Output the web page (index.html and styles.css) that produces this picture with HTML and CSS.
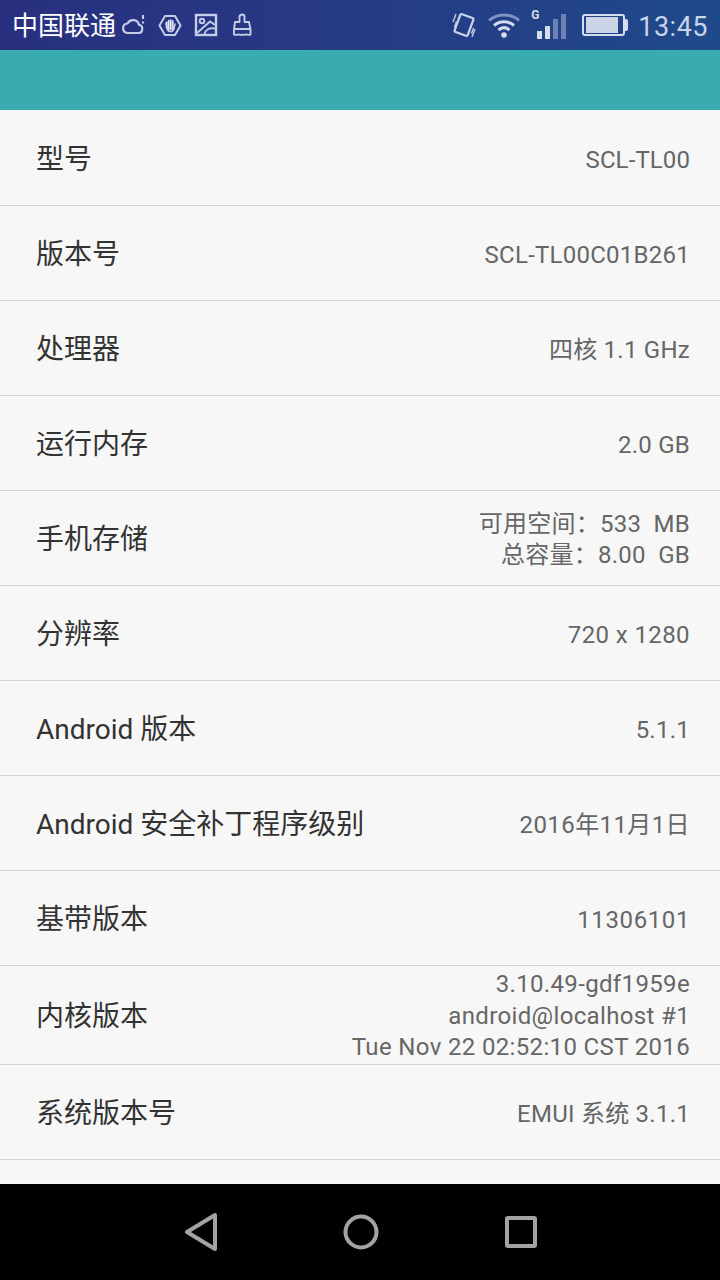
FILE: index.html
```html
<!DOCTYPE html>
<html lang="zh-CN">
<head>
<meta charset="utf-8">
<title>关于手机</title>
<link rel="stylesheet" href="styles.css">
</head>
<body>
<div class="screen">
  <header class="status">
    <div class="status-left">
      <span class="carrier">中国联通</span>
      <svg class="ic" width="24" height="24" viewBox="0 0 24 24" fill="none" stroke="#c5cde8" stroke-width="2.200"><path d="M6 20h11a4.200 4.200 0 0 0 1-8.300A6.200 6.200 0 0 0 6.500 10.500 4.800 4.800 0 0 0 6 20z"/><path d="M22 2v4M22 8.500v2"/></svg>
      <svg class="ic ic-hand" width="24" height="24" viewBox="0 0 24 24" fill="none" stroke="#c5cde8" stroke-width="2"><path d="M7 3h10l5.500 9.500L17 22H7L1.500 12.500z" stroke-linejoin="round"/><path d="M8 10.500l1 5c.500 2 2 3 3.500 3s3-1 3.500-3l1-4.500" stroke-width="1.600" stroke-linecap="round"/><path d="M8.800 9v6M10.800 7.500v9M12.800 7v9.500M14.800 8v8" stroke-width="1.700" stroke-linecap="round" stroke="#dfe3f3"/></svg>
      <svg class="ic ic-pic" width="24" height="24" viewBox="0 0 24 24" fill="none" stroke="#c5cde8" stroke-width="2.400"><rect x="2" y="2" width="20" height="20"/><circle cx="8" cy="8" r="2.300" stroke-width="1.900"/><path d="M3 20L16 8.500l5 3.500M10.500 21c1-4 5-6.500 10.500-5.500" stroke-width="1.900"/></svg>
      <svg class="ic ic-brush" width="24" height="24" viewBox="0 0 24 24" fill="none" stroke="#c5cde8" stroke-width="1.900" stroke-linejoin="round"><path d="M9.500 9V4a2.500 2.500 0 0 1 5 0v5h4.500l1.500 7.500v5c-1.500 1-3 0-4 0s-2.500 1-4 0c-1.500 1-3 0-4 0s-2.500 1-4.500 0v-5L5 9zM3.500 16h17"/></svg>
    </div>
    <div class="status-right">
      <svg class="ic" width="24" height="26" viewBox="0 0 24 26" fill="none" stroke="#c9d3ea"><rect x="5" y="3.500" width="14" height="19" rx="1.500" transform="rotate(20 12 13)" stroke-width="2.200"/><path d="M1 10l3-8M2.500 15l2-5.500M21.500 16l-2 5.500M23 17l-3 8" stroke-width="1.300"/></svg>
      <svg class="ic ic-wifi" width="34" height="26" viewBox="0 0 34 26" fill="none" stroke-width="3"><path d="M2 8.500C10 1 24 1 32 8.500" stroke="#7f93c3"/><path d="M7 13.500c6-5 14-5 20 0M11.500 18c3.500-3 7.500-3 11 0" stroke="#d5dcee"/><circle cx="17" cy="23" r="2.800" fill="#d5dcee"/></svg>
      <div class="signal">
        <span class="signal-g">G</span>
        <span class="bar bar-1"></span>
        <span class="bar bar-2"></span>
        <span class="bar bar-3"></span>
        <span class="bar bar-4"></span>
      </div>
      <div class="battery"><span class="battery-fill"></span></div>
      <span class="clock">13:45</span>
    </div>
  </header>
  <div class="appbar"></div>
  <main class="list">
    <div class="row"><span class="label">型号</span><div class="value value-tight">SCL-TL00</div></div>
    <div class="row"><span class="label">版本号</span><div class="value">SCL-TL00C01B261</div></div>
    <div class="row"><span class="label">处理器</span><div class="value">四核 1.1 GHz</div></div>
    <div class="row"><span class="label">运行内存</span><div class="value">2.0 GB</div></div>
    <div class="row"><span class="label">手机存储</span><div class="value"><div>可用空间：533&nbsp; MB</div><div>总容量：8.00&nbsp; GB</div></div></div>
    <div class="row"><span class="label">分辨率</span><div class="value value-wide">720 x 1280</div></div>
    <div class="row"><span class="label">Android 版本</span><div class="value">5.1.1</div></div>
    <div class="row"><span class="label">Android 安全补丁程序级别</span><div class="value value-wide">2016年11月1日</div></div>
    <div class="row"><span class="label">基带版本</span><div class="value value-widest">11306101</div></div>
    <div class="row row-tall"><span class="label">内核版本</span><div class="value value-kernel"><div>3.10.49-gdf1959e</div><div>android@localhost #1</div><div>Tue Nov 22 02:52:10 CST 2016</div></div></div>
    <div class="row"><span class="label">系统版本号</span><div class="value">EMUI 系统 3.1.1</div></div>
  </main>
  <nav class="navbar">
    <svg width="36" height="40" viewBox="0 0 36 40" fill="none" stroke="#a3a3a3" stroke-width="4" stroke-linejoin="round"><path d="M32 3v34L4 20z"/></svg>
    <svg width="36" height="36" viewBox="0 0 36 36" fill="none" stroke="#a3a3a3" stroke-width="4"><circle cx="18" cy="18" r="15.500"/></svg>
    <svg class="nav-square" width="32" height="32" viewBox="0 0 32 32" fill="none" stroke="#a3a3a3" stroke-width="4" stroke-linejoin="round"><rect x="2" y="2" width="28" height="28" rx="1"/></svg>
  </nav>
</div>
</body>
</html>
```
FILE: styles.css
```css
* { box-sizing: border-box; }
html, body { margin: 0; padding: 0; }
body {
  font-family: Roboto, "Noto Sans CJK SC", sans-serif;
  background: #f7f7f7;
}
.screen {
  width: 720px;
  height: 1280px;
  display: flex;
  flex-direction: column;
  overflow: hidden;
}
.status {
  height: 50px;
  flex: none;
  display: flex;
  align-items: center;
  justify-content: space-between;
  padding: 0 12px;
  background: linear-gradient(90deg, #28307f 0%, #263a85 50%, #1f4a8a 100%);
}
.status-left, .status-right { display: flex; align-items: center; }
.carrier { font-size: 26px; color: #fff; margin-right: 5px; padding-bottom: 3px; }
.ic { display: block; flex: none; }
.ic-hand { margin-left: 13px; }
.ic-pic { margin-left: 12px; }
.ic-brush { margin-left: 12px; }
.ic-wifi { margin-left: 11px; }
.signal {
  position: relative;
  width: 36px;
  height: 26px;
  margin-left: 10px;
  margin-top: 1px;
  display: flex;
  align-items: flex-end;
  gap: 3.500px;
  padding-left: 6px;
}
.signal-g {
  position: absolute;
  left: 0;
  top: -5px;
  font-size: 12px;
  font-weight: 700;
  line-height: 14px;
  color: #d5dcee;
}
.bar { width: 4.500px; display: block; }
.bar-1 { height: 8px; background: #d5dcee; }
.bar-2 { height: 13px; background: #d5dcee; }
.bar-3 { height: 20px; background: #6d82b4; }
.bar-4 { height: 25px; background: #6d82b4; }
.battery {
  position: relative;
  width: 43px;
  height: 22px;
  margin-left: 15px;
  border: 2px solid #d5dcee;
  border-radius: 3px;
  padding: 1px 2px;
}
.battery::after {
  content: "";
  position: absolute;
  right: -5px;
  top: 3px;
  width: 3px;
  height: 12px;
  background: #d5dcee;
  border-radius: 0 2px 2px 0;
}
.battery-fill { display: block; width: 32px; height: 16px; background: #ccd5e8; }
.clock {
  font-size: 27px;
  color: #c9d3ea;
  margin-left: 13px;
  padding-top: 3px;
  letter-spacing: 0.5px;
}
.appbar { height: 60px; flex: none; background: #38acb0; }
.list { flex: 1; min-height: 0; background: #f7f7f7; padding-top: 1px; }
.row {
  height: 95px;
  display: flex;
  align-items: center;
  justify-content: space-between;
  padding: 0 30px 2px 36px;
  border-bottom: 1px solid #d4d4d4;
}
.row-tall { height: 99px; }
.label {
  font-size: 28px;
  color: #333;
  white-space: nowrap;
}
.value {
  font-size: 24px;
  line-height: 31px;
  padding-top: 6px;
  color: #666;
  text-align: right;
  white-space: nowrap;
  letter-spacing: 0.25px;
}
.value-tight { letter-spacing: 0.1px; }
.value-wide { letter-spacing: 0.4px; }
.value-widest { letter-spacing: 0.6px; }
.value-kernel { letter-spacing: 0.35px; line-height: 31.500px; padding-top: 5px; }
.navbar {
  height: 96px;
  flex: none;
  background: #000;
  display: flex;
  align-items: center;
  justify-content: center;
  gap: 124px;
}
.nav-square { margin-left: 2px; }
```
